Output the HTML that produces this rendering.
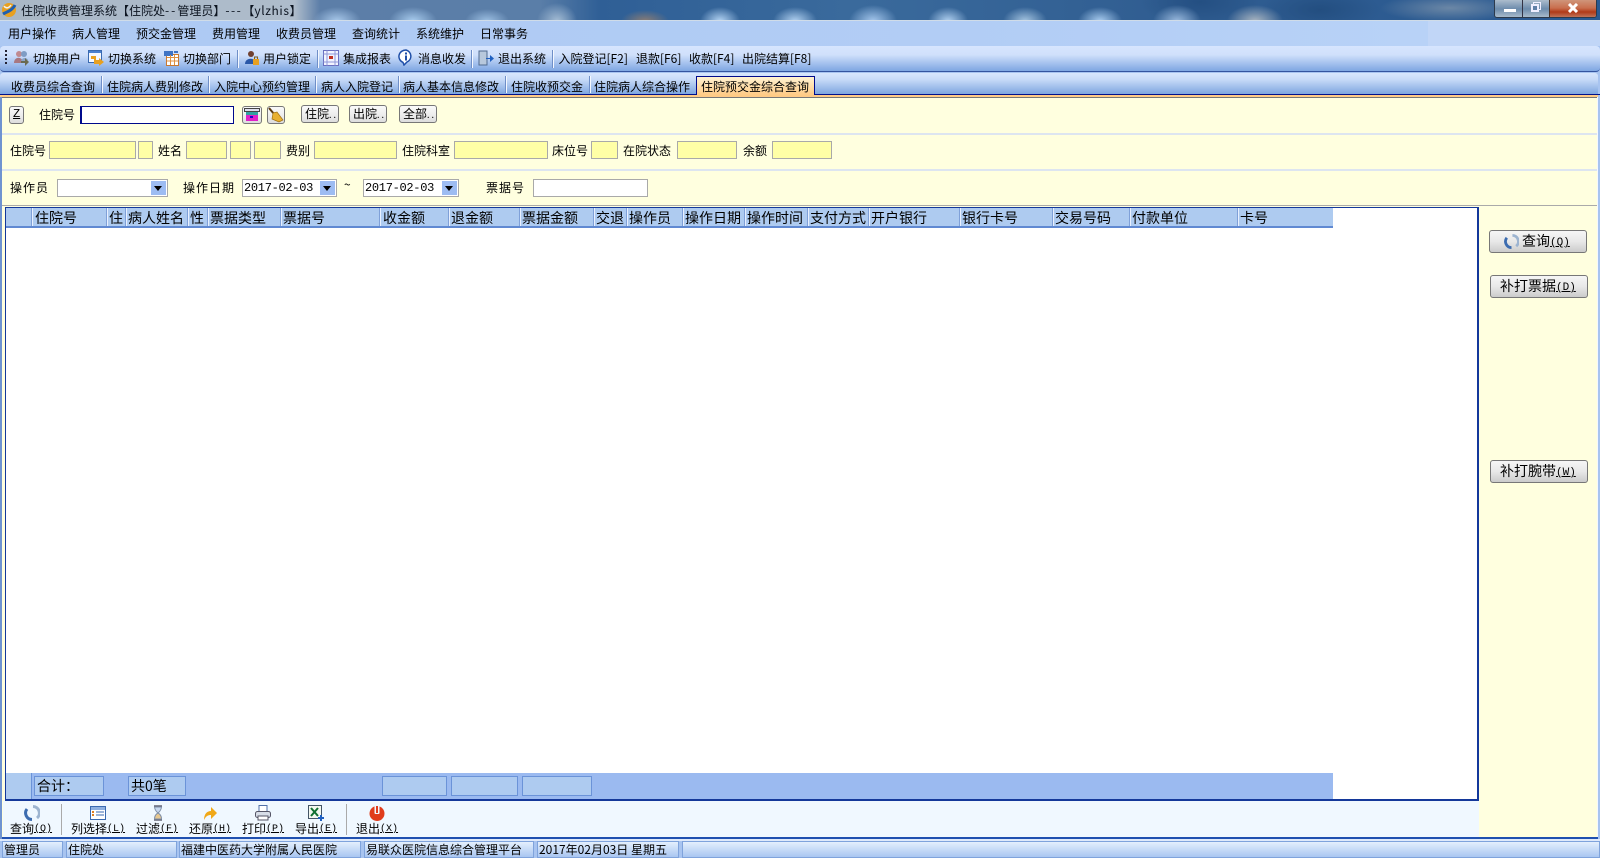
<!DOCTYPE html>
<html lang="zh"><head><meta charset="utf-8"><title>住院收费管理系统</title>
<style>
html,body{margin:0;padding:0;width:1600px;height:858px;overflow:hidden;background:#a8c4f0}
body{position:relative;font:12px/14px "WenQuanYi Zen Hei","Noto Sans CJK SC",sans-serif;color:#000}
div,svg,span.t{position:absolute;box-sizing:border-box}
.t{white-space:nowrap}
.m{top:27px;line-height:14px}
.tb{top:52px;line-height:14px}
.tab{top:80px;line-height:14px}
.sep{width:2px;background:linear-gradient(90deg,#6f8fc8 50%,#f4f8ff 50%)}
.l{top:144px}
.l3{top:181px;letter-spacing:1px}
.y{top:141px;height:18px;background:#ffffa6;border:1px solid #a9a9a9}
.w{top:179px;height:18px;background:#fff;border:1px solid #a9a9a9}
.ar{top:1px;right:1px;width:15px;height:14px;background:#9dbcf2}
.ar:after{content:"";position:absolute;left:3px;top:5px;border:4px solid transparent;border-top:5px solid #000;border-bottom:0}
.d{font:12px/16px "Liberation Mono",monospace;left:1px;top:0;letter-spacing:-.3px}
.b{top:105px;height:18px;background:linear-gradient(#fafafa,#eee 50%,#ddd);border:1px solid #777;border-radius:3px;text-align:left;padding-left:3px;line-height:15px;white-space:nowrap;overflow:hidden}
.h{top:210px;font-size:14px;line-height:16px}
.hs{top:208px;height:18px;width:2px;background:linear-gradient(90deg,#7fa0d8 50%,#e8f0ff 50%)}
.fb{top:776px;height:20px;background:#aecbf0;border:1px solid #6b93d8;font-size:14px;line-height:18px;padding-left:2px;white-space:nowrap}
.bb{left:1490px;width:98px;height:23px;border:1px solid #777;border-radius:3px;background:linear-gradient(#f6f6f6,#e8e8e8 50%,#cbcbcb);font-size:14px;line-height:20px;white-space:nowrap}
.s{font:10px/14px "Liberation Mono",monospace;text-decoration:underline;position:relative;top:-2px}
.bt{top:822px;line-height:14px}
.st{top:841px;height:17px;background:linear-gradient(#e4effd,#a9c6f1);border:1px solid #7fa3dc;line-height:16px;padding-left:1px;white-space:nowrap}
</style></head><body>

<!-- title bar -->
<div style="left:0;top:0;width:1600px;height:21px;overflow:hidden;background:#2f5f96">
<div style="left:0;top:0;width:1600px;height:21px;background:
radial-gradient(ellipse 24px 14px at 337px 21px,#a8c8ea,transparent),
radial-gradient(ellipse 24px 14px at 413px 21px,#a8ccee,transparent),
radial-gradient(ellipse 22px 12px at 487px 21px,#9cbfe2,transparent),
radial-gradient(ellipse 20px 18px at 557px 21px,#a4bcd4,transparent),
radial-gradient(ellipse 24px 11px at 645px 21px,#8a7c74,transparent),
radial-gradient(ellipse 20px 14px at 720px 21px,#b4d4f4,transparent),
radial-gradient(ellipse 22px 14px at 795px 21px,#b0d0f0,transparent),
radial-gradient(ellipse 24px 16px at 873px 21px,#a4c6ec,transparent),
radial-gradient(ellipse 20px 14px at 948px 21px,#b0d0f0,transparent),
radial-gradient(ellipse 22px 14px at 1025px 21px,#a4c4e0,transparent),
radial-gradient(ellipse 22px 14px at 1100px 21px,#a8ccf0,transparent),
radial-gradient(ellipse 24px 16px at 1177px 21px,#98b8dc,transparent),
radial-gradient(ellipse 28px 16px at 1255px 21px,#a8b4c0,transparent),
radial-gradient(ellipse 60px 24px at 1200px 2px,#244f82,transparent),
radial-gradient(ellipse 60px 22px at 1320px 10px,#234e80,transparent),
radial-gradient(ellipse 70px 14px at 1450px 8px,#6b87a6,transparent),
linear-gradient(90deg,#a9b7c6 0,#aebccb 295px,#5c7ea8 320px,#5a7ea8 540px,#2f5f96 600px,#3a6a9c 850px,#2f5c90 1200px,#2a5a92 100%)"></div>
<div style="left:0;top:20px;width:1600px;height:1px;background:#d0dce8"></div>
</div>
<svg style="left:1px;top:2px" width="16" height="16" viewBox="0 0 16 16"><circle cx="8" cy="8" r="7" fill="#e8a020"/><path d="M2 12C5 10 11 9 14 3" stroke="#1f5fb0" stroke-width="3" fill="none"/><path d="M3 4C5 7 8 6 10 3" stroke="#f0f0f0" stroke-width="1.500" fill="none"/></svg>
<span class="t" style="left:21px;top:4px;line-height:14px;color:#0c1420">住院收费管理系统【住院处<span style="letter-spacing:2px">--</span>管理员】<span style="letter-spacing:1.500px">---</span>【<span style="letter-spacing:.6px">ylzhis</span>】</span>
<!-- window buttons -->
<div style="left:1494px;top:-2px;width:103px;height:20px;border:1px solid #2c3a4c;border-radius:3px;background:linear-gradient(#b3c2d0,#6d8cac 55%,#a8bacb);overflow:hidden">
 <div style="left:54px;top:0;width:48px;height:20px;background:linear-gradient(#d09a80,#c96f4e 45%,#b03a18 65%,#c78a70);border-left:1px solid #4c3020"></div>
 <div style="left:27px;top:0;width:1px;height:20px;background:#334"></div>
 <div style="left:9px;top:10px;width:12px;height:3px;background:#fff"></div>
 <div style="left:38px;top:3px;width:8px;height:8px;border:1px solid #eef"></div>
 <div style="left:36px;top:5px;width:8px;height:8px;border:2px solid #eef;background:#5f80a8"></div>
</div>
<svg style="left:1567px;top:3px" width="12" height="10" viewBox="0 0 12 10"><path d="M2 1L10 9M10 1L2 9" stroke="#fff" stroke-width="3"/></svg>

<!-- menu -->
<div style="left:0;top:21px;width:1600px;height:25px;background:linear-gradient(90deg,#adc9f3,#b2cdf5 60%,#b8d2f7 89.250%,#c1d6f7 89.250%,#c1d6f7)"></div>
<span class="t m" style="left:8px">用户操作</span>
<span class="t m" style="left:72px">病人管理</span>
<span class="t m" style="left:136px">预交金管理</span>
<span class="t m" style="left:212px">费用管理</span>
<span class="t m" style="left:276px">收费员管理</span>
<span class="t m" style="left:352px">查询统计</span>
<span class="t m" style="left:416px">系统维护</span>
<span class="t m" style="left:480px">日常事务</span>

<!-- toolbar -->
<div style="left:0;top:46px;width:1600px;height:26px;background:linear-gradient(#d6e5fe,#d0e0fb 35%,#7fa6e2);border-bottom:1px solid #34549f;border-radius:4px"></div>
<div style="left:5px;top:50px;width:2px;height:16px;background:repeating-linear-gradient(#223 0 2px,transparent 2px 4px)"></div>
<svg style="left:13px;top:50px" width="17" height="16" viewBox="0 0 17 16"><circle cx="6" cy="4" r="3" fill="#c08a90"/><circle cx="11" cy="4" r="3" fill="#7f9cc4"/><path d="M1 13c0-7 9-7 9 0z" fill="#a87880"/><path d="M8 12c0-5 6-5 7-2z" fill="#8aa4c8"/><path d="M8 11h4V8l4 4-4 4v-3H8z" fill="#6a6a50"/></svg>
<span class="t tb" style="left:33px">切换用户</span>
<svg style="left:88px;top:50px" width="17" height="16" viewBox="0 0 17 16"><rect x=".5" y=".5" width="13" height="12" fill="#f4f8ff" stroke="#3a6ab0"/><rect x="1" y="1" width="12" height="2" fill="#4a80d0"/><path d="M3 6h5v4h3V8l5 4-5 4v-2H6v-5H3z" fill="#e8a020"/></svg>
<span class="t tb" style="left:108px">切换系统</span>
<svg style="left:163px;top:50px" width="16" height="16" viewBox="0 0 16 16"><rect x="3.500" y="4.500" width="12" height="11" fill="#fff" stroke="#c87830"/><rect x="1" y="1" width="9" height="5" fill="#3f73c4"/><rect x="11" y="1" width="4" height="2" fill="#3f73c4"/><path d="M4 7.500h11M4 11h11M7.500 5v10M11.500 5v10" stroke="#e09040"/></svg>
<span class="t tb" style="left:183px">切换部门</span>
<div class="sep" style="left:237px;top:50px;height:18px"></div>
<svg style="left:244px;top:50px" width="16" height="16" viewBox="0 0 16 16"><circle cx="7" cy="4" r="3" fill="#704030"/><path d="M1 14c0-7 11-7 11 0z" fill="#2a58a8"/><rect x="9" y="9" width="6" height="6" fill="#e8a020"/><path d="M10.500 9V7h3v2" stroke="#806020" fill="none"/></svg>
<span class="t tb" style="left:263px">用户锁定</span>
<div class="sep" style="left:317px;top:50px;height:18px"></div>
<svg style="left:323px;top:50px" width="16" height="16" viewBox="0 0 16 16"><rect x=".5" y=".5" width="15" height="15" fill="#f2f4ff" stroke="#6a70c0"/><path d="M.5 4h15M4 .5v15M12 .5v15M.5 12h15" stroke="#9098d8"/><rect x="6" y="6" width="4" height="3" fill="#c03020"/></svg>
<span class="t tb" style="left:343px">集成报表</span>
<svg style="left:398px;top:49px" width="16" height="17" viewBox="0 0 16 17"><path d="M8 1a7 6.500 0 0 0-3 12.400L6 16l3-3A7 6.500 0 0 0 8 1z" fill="#fff" stroke="#1f4fa8" stroke-width="1.500"/><rect x="7" y="3.500" width="2" height="2" fill="#1f4fa8"/><rect x="7" y="6.500" width="2" height="5" fill="#1f4fa8"/></svg>
<span class="t tb" style="left:418px">消息收发</span>
<div class="sep" style="left:471px;top:50px;height:18px"></div>
<svg style="left:478px;top:50px" width="16" height="16" viewBox="0 0 16 16"><rect x="1" y="1" width="8" height="14" fill="#b8c8dc" stroke="#506a90"/><path d="M8 8h4V5l4 3.500L12 12V9H8z" fill="#1f60c0"/></svg>
<span class="t tb" style="left:498px">退出系统</span>
<div class="sep" style="left:552px;top:50px;height:18px"></div>
<span class="t tb" style="left:558.500px">入院登记[F2]</span>
<span class="t tb" style="left:636px">退款[F6]</span>
<span class="t tb" style="left:689px">收款[F4]</span>
<span class="t tb" style="left:742px">出院结算[F8]</span>

<!-- tabs -->
<div style="left:0;top:73px;width:1598px;height:21px;background:linear-gradient(#d8e6fd,#c8dbf8 30%,#7fa6e0);border-radius:3px 3px 0 0"></div>
<span class="t tab" style="left:11px">收费员综合查询</span>
<div class="sep" style="left:101px;top:76px;height:17px"></div>
<span class="t tab" style="left:107px">住院病人费别修改</span>
<div class="sep" style="left:208px;top:76px;height:17px"></div>
<span class="t tab" style="left:214px">入院中心预约管理</span>
<div class="sep" style="left:315px;top:76px;height:17px"></div>
<span class="t tab" style="left:321px">病人入院登记</span>
<div class="sep" style="left:398px;top:76px;height:17px"></div>
<span class="t tab" style="left:403px">病人基本信息修改</span>
<div class="sep" style="left:505px;top:76px;height:17px"></div>
<span class="t tab" style="left:511px">住院收预交金</span>
<div class="sep" style="left:589px;top:76px;height:17px"></div>
<span class="t tab" style="left:594px">住院病人综合操作</span>
<div style="left:696px;top:76px;width:119px;height:19px;background:linear-gradient(#fff2d2,#ffcb86);border:1px solid #000a8c;border-bottom:0"></div>
<span class="t tab" style="left:701px">住院预交金综合查询</span>
<div style="left:0;top:94px;width:696px;height:1px;background:#00108c"></div>
<div style="left:815px;top:94px;width:785px;height:1px;background:#00108c"></div>
<div style="left:0;top:95px;width:1598px;height:2px;background:#ffcb86"></div>
<div style="left:2px;top:97px;width:1595px;height:1px;background:#777"></div>

<!-- cream content -->
<div style="left:2px;top:98px;width:1595px;height:743px;background:#ffffdf"></div>
<div style="left:1597px;top:97px;width:3px;height:744px;background:#a8c4f0;border-left:1px solid #f4f8ff"></div>
<div style="left:0;top:97px;width:2px;height:744px;background:#6f93d0"></div>

<!-- row 1 -->
<div class="b" style="left:9px;width:15px;padding-left:3px;top:106px;text-decoration:underline;font-family:'Liberation Mono',monospace">Z</div>
<span class="t" style="left:39px;top:108px">住院号</span>
<div style="left:80px;top:106px;width:154px;height:18px;background:#fff;border:2px solid #000a8c;border-width:1px 1px 1px 2px"></div>
<div class="b" style="left:242px;width:20px;top:106px"></div>
<svg style="left:244px;top:108px" width="16" height="14" viewBox="0 0 16 14"><rect x=".5" y=".5" width="15" height="3" fill="#dde" stroke="#444"/><rect x="2" y="4" width="12" height="9" fill="#e020c8"/><rect x="2" y="4" width="12" height="3" fill="#30a0a0"/><rect x="6" y="8" width="3" height="2" fill="#20c"/></svg>
<div class="b" style="left:267px;width:18px;top:106px"></div>
<svg style="left:268px;top:107px" width="16" height="16" viewBox="0 0 16 16"><path d="M1 1l5 6" stroke="#5a3a10" stroke-width="2"/><path d="M5 6l4-1 6 8-4 2-7-3z" fill="#e8b030" stroke="#a07010" stroke-width=".7"/></svg>
<div class="b" style="left:301px;width:38px">住院<span style="font-size:9px;letter-spacing:2px">..</span></div>
<div class="b" style="left:349px;width:38px">出院<span style="font-size:9px;letter-spacing:2px">..</span></div>
<div class="b" style="left:399px;width:38px">全部<span style="font-size:9px;letter-spacing:2px">..</span></div>
<div style="left:2px;top:133px;width:1595px;height:2px;background:#dde5f0"></div>

<!-- row 2 -->
<span class="t l" style="left:10px">住院号</span><div class="y" style="left:49px;width:87px"></div><div class="y" style="left:138px;width:15px"></div>
<span class="t l" style="left:158px">姓名</span><div class="y" style="left:186px;width:41px"></div><div class="y" style="left:230px;width:21px"></div><div class="y" style="left:254px;width:27px"></div>
<span class="t l" style="left:286px">费别</span><div class="y" style="left:314px;width:83px"></div>
<span class="t l" style="left:402px">住院科室</span><div class="y" style="left:454px;width:94px"></div>
<span class="t l" style="left:552px">床位号</span><div class="y" style="left:591px;width:27px"></div>
<span class="t l" style="left:623px">在院状态</span><div class="y" style="left:677px;width:60px"></div>
<span class="t l" style="left:743px">余额</span><div class="y" style="left:772px;width:60px"></div>
<div style="left:2px;top:169px;width:1595px;height:2px;background:#dde5f0"></div>

<!-- row 3 -->
<span class="t l3" style="left:10px">操作员</span>
<div class="w" style="left:57px;width:111px"><div class="ar"></div></div>
<span class="t l3" style="left:183px">操作日期</span>
<div class="w" style="left:242px;width:95px"><span class="t d">2017-02-03</span><div class="ar"></div></div>
<span class="t" style="left:344px;top:178px">~</span>
<div class="w" style="left:363px;width:96px"><span class="t d">2017-02-03</span><div class="ar"></div></div>
<span class="t l3" style="left:486px">票据号</span>
<div class="w" style="left:533px;width:115px"></div>
<div style="left:2px;top:205px;width:1595px;height:1px;background:#aaa"></div>

<!-- grid -->
<div style="left:5px;top:207px;width:1474px;height:594px;background:#fff;border:1px solid #14389a;border-width:1px 2px 2px 1px"></div>
<div style="left:6px;top:208px;width:1327px;height:20px;background:#aecbf0;border-bottom:2px solid #6089d2"></div>
<div class="hs" style="left:31px"></div><span class="t h" style="left:35px">住院号</span>
<div class="hs" style="left:106px"></div><span class="t h" style="left:109px">住</span>
<div class="hs" style="left:125px"></div><span class="t h" style="left:128px">病人姓名</span>
<div class="hs" style="left:187px"></div><span class="t h" style="left:190px">性</span>
<div class="hs" style="left:207px"></div><span class="t h" style="left:210px">票据类型</span>
<div class="hs" style="left:280px"></div><span class="t h" style="left:283px">票据号</span>
<div class="hs" style="left:379px"></div><span class="t h" style="left:383px">收金额</span>
<div class="hs" style="left:448px"></div><span class="t h" style="left:451px">退金额</span>
<div class="hs" style="left:519px"></div><span class="t h" style="left:522px">票据金额</span>
<div class="hs" style="left:593px"></div><span class="t h" style="left:596px">交退</span>
<div class="hs" style="left:626px"></div><span class="t h" style="left:629px">操作员</span>
<div class="hs" style="left:682px"></div><span class="t h" style="left:685px">操作日期</span>
<div class="hs" style="left:744px"></div><span class="t h" style="left:747px">操作时间</span>
<div class="hs" style="left:807px"></div><span class="t h" style="left:810px">支付方式</span>
<div class="hs" style="left:868px"></div><span class="t h" style="left:871px">开户银行</span>
<div class="hs" style="left:959px"></div><span class="t h" style="left:962px">银行卡号</span>
<div class="hs" style="left:1052px"></div><span class="t h" style="left:1055px">交易号码</span>
<div class="hs" style="left:1129px"></div><span class="t h" style="left:1132px">付款单位</span>
<div class="hs" style="left:1237px"></div><span class="t h" style="left:1240px">卡号</span>

<!-- grid footer -->
<div style="left:6px;top:773px;width:1327px;height:26px;background:#9bbaf0"></div>
<div style="left:6px;top:773px;width:26px;height:26px;background:#aecbf0;border-right:1px solid #6b93d8"></div>
<div class="fb" style="left:34px;width:70px">合计：</div>
<div class="fb" style="left:128px;width:58px">共0笔</div>
<div class="fb" style="left:382px;width:65px"></div>
<div class="fb" style="left:451px;width:67px"></div>
<div class="fb" style="left:522px;width:70px"></div>

<!-- bottom toolbar -->
<div style="left:3px;top:801px;width:1476px;height:36px;background:#f0f8ff"></div>
<div style="left:2px;top:837px;width:1596px;height:2px;background:#1f50b0"></div>
<div style="left:0;top:839px;width:1600px;height:2px;background:#dfeafb"></div>
<div style="left:61px;top:804px;width:1px;height:31px;background:#aaa"></div>
<div style="left:346px;top:804px;width:1px;height:31px;background:#aaa"></div>

<svg style="left:24px;top:805px" width="16" height="16" viewBox="0 0 16 16"><path d="M9 1.500A6.500 6.500 0 0 1 13 13" stroke="#9db4d0" stroke-width="3" fill="none"/><path d="M8 14.500A6.500 6.500 0 0 1 3 4" stroke="#3c6cb0" stroke-width="3" fill="none"/></svg>
<span class="t bt" style="left:10px">查询<span class="s">(Q)</span></span>
<svg style="left:90px;top:806px" width="16" height="14" viewBox="0 0 16 14"><rect x=".5" y=".5" width="15" height="13" fill="#fff" stroke="#3a6ab0"/><rect x="1" y="1" width="14" height="3" fill="#8eb0e0"/><path d="M2 6h2M2 9h2" stroke="#e08020" stroke-width="2"/><path d="M6 6h8M6 9h8" stroke="#3a6ab0"/></svg>
<span class="t bt" style="left:71px">列选择<span class="s">(L)</span></span>
<svg style="left:152px;top:805px" width="12" height="16" viewBox="0 0 12 16"><path d="M2 1h8M2 15h8" stroke="#667" stroke-width="1.500"/><path d="M2.500 2C3 6 5 7 6 8 7 7 9 6 9.500 2z" fill="#c8d8f0" stroke="#8090a8"/><path d="M6 8C4 9 2.500 11 2.500 14h7C9.500 11 8 9 6 8z" fill="#e8c890" stroke="#8090a8"/></svg>
<span class="t bt" style="left:136px">过滤<span class="s">(F)</span></span>
<svg style="left:202px;top:805px" width="16" height="16" viewBox="0 0 16 16"><path d="M2 15C2 9 5 6 9 6V2l6 6-6 6v-4C6 10 4 11 2 15z" fill="#f0a818"/></svg>
<span class="t bt" style="left:189px">还原<span class="s">(H)</span></span>
<svg style="left:255px;top:805px" width="16" height="16" viewBox="0 0 16 16"><rect x="4" y=".5" width="8" height="6" fill="#fff" stroke="#5070a8"/><rect x=".5" y="6.500" width="15" height="6" rx="2" fill="#d8dee8" stroke="#556"/><rect x="3" y="11" width="10" height="4" fill="#fff" stroke="#556"/></svg>
<span class="t bt" style="left:242px">打印<span class="s">(P)</span></span>
<svg style="left:308px;top:805px" width="16" height="16" viewBox="0 0 16 16"><rect x=".5" y=".5" width="13" height="13" fill="#f4f8f0" stroke="#456"/><path d="M3 3l7 8M10 3l-7 8" stroke="#107030" stroke-width="2"/><path d="M10 12h2v-2h2v2h2v2h-2v2h-2v-2h-2z" fill="#2060c0"/></svg>
<span class="t bt" style="left:295px">导出<span class="s">(E)</span></span>
<svg style="left:369px;top:805px" width="16" height="16" viewBox="0 0 16 16"><circle cx="8" cy="8.500" r="7.500" fill="#e03c1c"/><rect x="5.500" y="0" width="5" height="9" rx="1" fill="#f0f8ff"/><rect x="7" y="1" width="2" height="7" fill="#e03c1c"/></svg>
<span class="t bt" style="left:356px">退出<span class="s">(X)</span></span>

<!-- right buttons -->
<div class="bb" style="left:1489px;top:230px;padding-left:12px"><svg style="left:14px;top:3px" width="15" height="15" viewBox="0 0 16 16"><path d="M9 1.500A6.500 6.500 0 0 1 13 13" stroke="#9db4d0" stroke-width="3" fill="none"/><path d="M8 14.500A6.500 6.500 0 0 1 3 4" stroke="#3c6cb0" stroke-width="3" fill="none"/></svg><span style="margin-left:20px">查询<span class="s" style="font-size:11px;top:-1px">(Q)</span></span></div>
<div class="bb" style="top:275px;padding-left:9px">补打票据<span class="s" style="font-size:11px;top:-1px">(D)</span></div>
<div class="bb" style="top:460px;padding-left:9px">补打腕带<span class="s" style="font-size:11px;top:-1px">(W)</span></div>

<!-- status -->
<div class="st" style="left:2px;width:61px;padding-left:1px">管理员</div>
<div class="st" style="left:66px;width:111px">住院处</div>
<div class="st" style="left:179px;width:182px">福建中医药大学附属人民医院</div>
<div class="st" style="left:364px;width:170px">易联众医院信息综合管理平台</div>
<div class="st" style="left:537px;width:142px">2017年02月03日 星期五</div>
<div class="st" style="left:682px;width:918px"></div>
</body></html>
